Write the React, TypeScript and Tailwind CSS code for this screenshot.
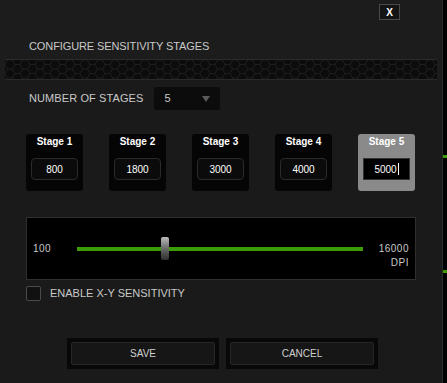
import React from "react";

const stages = [
  { label: "Stage 1", value: "800" },
  { label: "Stage 2", value: "1800" },
  { label: "Stage 3", value: "3000" },
  { label: "Stage 4", value: "4000" },
  { label: "Stage 5", value: "5000", active: true },
];

const HexBand = () => (
  <svg className="absolute inset-0 h-full w-full" aria-hidden>
    <defs>
      <pattern id="hex" width="15" height="9" patternUnits="userSpaceOnUse">
        <path
          d="M0 4.5 L2.5 0 L7.5 0 L10 4.5 L7.5 9 L2.5 9 Z M10 4.5 L15 4.5"
          fill="none"
          stroke="#222"
          strokeWidth="0.8"
        />
      </pattern>
    </defs>
    <rect width="100%" height="100%" fill="url(#hex)" />
  </svg>
);

const App = () => {
  return (
    <div className="flex h-[383px] w-[447px] bg-black font-['Liberation_Sans',sans-serif] text-[#c9c9c9]">
      <div className="flex w-[443px] flex-col border-r border-[#2c2c2c] bg-[#1c1c1c]">
        {/* header */}
        <div className="flex justify-end pr-[42px] pt-[4px]">
          <button className="flex h-[16px] w-[21px] items-center justify-center border border-[#4a4a4a] bg-[#141414] text-[10px] font-bold text-white">
            X
          </button>
        </div>
        <div className="ml-[29px] mt-[18px] text-[11px] leading-[16px] tracking-[-0.1px]">
          CONFIGURE SENSITIVITY STAGES
        </div>

        {/* hex band */}
        <div className="relative mx-[5px] mt-[5px] h-[21px] overflow-hidden border-y border-[#2a2a2a] bg-[#0c0c0c]">
          <HexBand />
        </div>

        <div className="flex flex-1 flex-col bg-[#1a1a1a]">
          {/* number of stages */}
          <div className="ml-[29px] mt-[7px] flex items-center gap-[11px]">
            <span className="text-[11px] tracking-[0.1px]">NUMBER OF STAGES</span>
            <div className="flex h-[23px] w-[66px] items-center justify-between rounded-[2px] bg-[#0c0c0c] px-[10px] text-[11px]">
              <span>5</span>
              <svg width="8" height="6" viewBox="0 0 8 6">
                <path d="M0 0 L8 0 L4 6 Z" fill="#5a5a5a" />
              </svg>
            </div>
          </div>

          {/* stages */}
          <div className="ml-[26px] mt-[24px] flex gap-[26px]">
            {stages.map((s) => (
              <div
                key={s.label}
                className={`flex h-[57px] w-[57px] flex-col items-center rounded-[3px] pt-[1px] ${
                  s.active ? "bg-[#8a8a8a]" : "bg-[#050505]"
                }`}
              >
                <span className="text-[10px] font-bold leading-[14px] text-white">{s.label}</span>
                <div
                  className={`mt-[9px] flex h-[22px] w-[47px] items-center justify-center text-[10px] text-white ${
                    s.active
                      ? "border border-[#333] bg-black"
                      : "rounded-[4px] border border-[#2a2a2a] bg-[#0b0b0b]"
                  }`}
                >
                  {s.value}
                  {s.active && <span className="ml-[1px] h-[12px] w-px bg-white" />}
                </div>
              </div>
            ))}
          </div>

          {/* slider */}
          <div className="ml-[26px] mt-[26px] flex h-[63px] w-[390px] items-center border border-[#2f2f2f] bg-black pl-[6px] pr-[6px]">
            <span className="w-[44px] text-[10px] tracking-[0.5px]">100</span>
            <div className="relative flex h-[24px] w-[286px] items-center">
              <div className="h-[4px] w-full bg-[#3c9c05]" />
              <div className="absolute left-[84px] top-0 h-[23px] w-[8px] rounded-[2px] bg-gradient-to-b from-[#bdbdbd] via-[#6a6a6a] to-[#2e2e2e]" />
            </div>
            <div className="ml-auto flex flex-col items-end pt-[14px] text-[10px] leading-[14px] tracking-[0.5px]">
              <span>16000</span>
              <span>DPI</span>
            </div>
          </div>

          {/* checkbox */}
          <div className="ml-[26px] mt-[5px] flex items-center gap-[9px]">
            <div className="h-[15px] w-[15px] rounded-[2px] border border-[#4a4a4a] bg-[#111]" />
            <span className="text-[11px]">ENABLE X-Y SENSITIVITY</span>
          </div>

          {/* buttons */}
          <div className="ml-[67px] mt-[36px] flex gap-[7px]">
            {["SAVE", "CANCEL"].map((b) => (
              <div key={b} className="h-[31px] w-[152px] bg-[#080808] p-[4px]">
                <div className="flex h-full w-full items-center justify-center rounded-[2px] border border-[#262626] bg-[#161616] text-[10px] text-[#cfcfcf]">
                  {b}
                </div>
              </div>
            ))}
          </div>
        </div>
      </div>
      <div className="flex w-[4px] flex-col">
        <div className="mt-[155px] h-[3px] w-full bg-[#3c9c05]" />
        <div className="mt-[112px] h-[3px] w-full bg-[#3c9c05]" />
      </div>
    </div>
  );
};

export default App;
